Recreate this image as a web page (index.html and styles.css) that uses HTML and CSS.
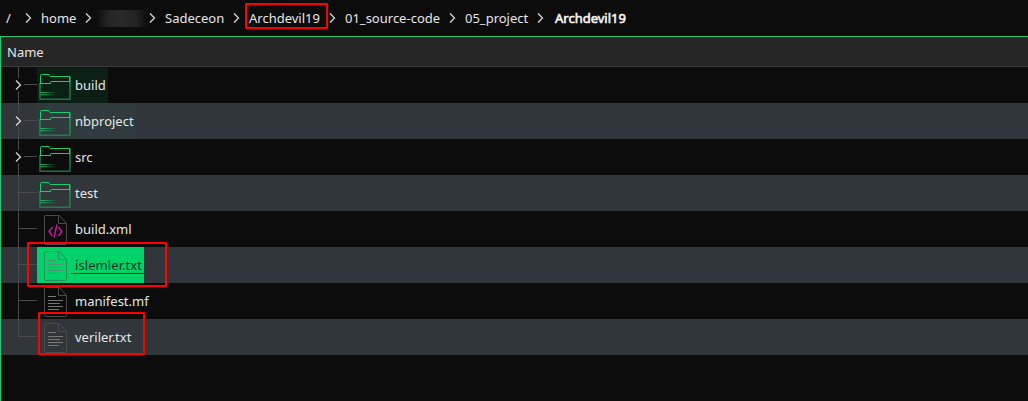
FILE: index.html
```
<!DOCTYPE html>
<html lang="en">
<head>
<meta charset="utf-8">
<title>Archdevil19</title>
<link rel="stylesheet" href="styles.css">
</head>
<body>
<svg class="defs" width="0" height="0">
  <defs>
    <linearGradient id="edge" x1="0" y1="0" x2="0" y2="1">
      <stop offset="0" stop-color="#20d673"/><stop offset="0.35" stop-color="#17a457"/><stop offset="1" stop-color="#258750"/>
    </linearGradient>
    <linearGradient id="fade" x1="0" y1="0" x2="1" y2="0">
      <stop offset="0" stop-color="#1ac468"/><stop offset="1" stop-color="#1ac468" stop-opacity="0"/>
    </linearGradient>
    <symbol id="chevron" viewBox="0 0 7 12"><path d="M1 1.5 5.5 6 1 10.5" fill="none" stroke="#d8d8d8" stroke-width="1.3"/></symbol>
    <symbol id="folder" viewBox="0 0 32 28">
      <path d="M1 10V26.200H31V3.500" fill="none" stroke="url(#edge)" stroke-width="1.5" stroke-linejoin="round" opacity=".8"/>
      <path d="M1.500 10.500V2.500Q1.500 1.500 2.500 1.500H10V2.500L11 3.500H30.500V9" fill="none" stroke="#1ccb6c"/>
      <path d="M1 10.500H11.500V9L12.500 8.500H30.500" fill="none" stroke="#1ccb6c"/>
      <path d="M1.500 19H18V20H1.500ZM1.500 21.200H18V22.200H1.500Z" fill="url(#fade)"/>
    </symbol>
    <symbol id="sheet" viewBox="0 0 24 31">
      <path d="M1.500.5H15.500L22.500 8.500V28.500Q22.500 29.500 21.500 29.500H1.500Q.5 29.500.5 28.500V1.500Q.5.5 1.500.5Z" fill="none" stroke="currentColor"/>
      <path d="M14.500.5V8.500H22.500" fill="none" stroke="currentColor"/>
    </symbol>
    <symbol id="lines" viewBox="0 0 24 31">
      <path d="M4 9.500H12M4 13.500H19M4 16.500H16M4 19.500H19M4 22.500H15" fill="none" stroke="currentColor" stroke-width="1.2"/>
    </symbol>
    <symbol id="code" viewBox="0 0 24 31">
      <path d="M8.500 12 5 16.500 8.500 21M14.500 12 18 16.500 14.500 21M13 9.500 10 22.500" fill="none" stroke="#d410a6" stroke-width="1.4"/>
    </symbol>
  </defs>
</svg>
<nav class="crumbs">
  <span class="crumb root">/</span><svg class="sep"><use href="#chevron"/></svg>
  <span class="crumb home">home</span><svg class="sep"><use href="#chevron"/></svg>
  <span class="redacted"></span><svg class="sep"><use href="#chevron"/></svg>
  <span class="crumb user">Sadeceon</span><svg class="sep"><use href="#chevron"/></svg>
  <span class="crumb repo">Archdevil19</span><svg class="sep"><use href="#chevron"/></svg>
  <span class="crumb source">01_source-code</span><svg class="sep"><use href="#chevron"/></svg>
  <span class="crumb project">05_project</span><svg class="sep"><use href="#chevron"/></svg>
  <span class="crumb current">Archdevil19</span>
</nav>
<main class="view">
  <header class="head">Name</header>
  <div class="row"><span class="tree expandable"><svg class="arrow"><use href="#chevron"/></svg></span><span class="item build"><svg class="folder"><use href="#folder"/></svg><span class="label">build</span></span></div>
  <div class="row"><span class="tree expandable"><svg class="arrow"><use href="#chevron"/></svg></span><span class="item nbproject"><svg class="folder"><use href="#folder"/></svg><span class="label">nbproject</span></span></div>
  <div class="row"><span class="tree expandable"><svg class="arrow"><use href="#chevron"/></svg></span><span class="item"><svg class="folder"><use href="#folder"/></svg><span class="label">src</span></span></div>
  <div class="row"><span class="tree"></span><span class="item"><svg class="folder"><use href="#folder"/></svg><span class="label">test</span></span></div>
  <div class="row"><span class="tree"></span><span class="item"><svg class="file"><use href="#sheet"/><use href="#code"/></svg><span class="label">build.xml</span></span></div>
  <div class="row"><span class="tree"></span><span class="item selected"><svg class="file"><use href="#sheet"/><use class="ink" href="#lines"/></svg><span class="label">islemler.txt</span></span></div>
  <div class="row"><span class="tree"></span><span class="item"><svg class="file"><use href="#sheet"/><use class="ink" href="#lines"/></svg><span class="label">manifest.mf</span></span></div>
  <div class="row"><span class="tree last"></span><span class="item"><svg class="file"><use href="#sheet"/><use class="ink" href="#lines"/></svg><span class="label">veriler.txt</span></span></div>
</main>
<div class="mark mark-repo"></div>
<div class="mark mark-islemler"></div>
<div class="mark mark-veriler"></div>
</body>
</html>
```
FILE: styles.css
```
* { box-sizing: border-box; }
body {
  margin: 0;
  width: 1028px;
  height: 401px;
  overflow: hidden;
  position: relative;
  display: flex;
  flex-direction: column;
  background: #0c0c0c;
  color: #e6e6e6;
  font: 13px/18px "Noto Sans", sans-serif;
  white-space: nowrap;
}
svg { display: block; flex: none; }
.defs { position: absolute; }
.crumbs {
  flex: none;
  height: 36px;
  padding-left: 6px;
  display: flex;
  align-items: center;
}
.crumb { flex: none; }
.root { width: 10px; }
.home { width: 35px; }
.user { width: 59px; }
.repo { width: 71px; }
.source { width: 95px; }
.project { width: 63px; }
.current { margin-left: 2px; -webkit-text-stroke: 0.6px #f4f4f4; color: #f4f4f4; }
.sep { width: 7px; height: 12px; margin: 0 9px; }
.redacted {
  flex: none;
  width: 52px;
  height: 17px;
  margin: 0 -8px 0 -5px;
  background: linear-gradient(90deg, #0c0c0c, #252525 25%, #2a2a2a 50%, #222 78%, #0c0c0c);
}
.view {
  flex: 1;
  border-top: 1px solid #24c872;
  border-left: 1px solid #24c872;
}
.head {
  height: 30px;
  padding: 6px 0 0 6px;
  background: #262626;
  border-bottom: 1px solid #3b3b3b;
}
.row { height: 36px; display: flex; }
.row:nth-child(odd) { background: #31363b; }
.tree {
  flex: none;
  width: 36px;
  background:
    linear-gradient(#4b4b4b, #4b4b4b) 17px 0 / 1px 100% no-repeat,
    linear-gradient(#4b4b4b, #4b4b4b) 18px 17px / 18px 1px no-repeat;
}
.tree.last {
  background:
    linear-gradient(#4b4b4b, #4b4b4b) 17px 0 / 1px 17px no-repeat,
    linear-gradient(#4b4b4b, #4b4b4b) 17px 17px / 19px 1px no-repeat;
}
.tree.expandable {
  padding: 12px 0 0 14px;
  background:
    linear-gradient(#4b4b4b, #4b4b4b) 17px 0 / 1px 11px no-repeat,
    linear-gradient(#4b4b4b, #4b4b4b) 17px 24px / 1px 12px no-repeat,
    linear-gradient(#4b4b4b, #4b4b4b) 23px 17px / 13px 1px no-repeat;
}
.arrow { width: 7px; height: 12px; }
.item { display: flex; height: 36px; padding-left: 2px; }
.build { width: 71px; background: #0c1f15; }
.nbproject { width: 99px; background: #2f3b3c; }
.folder { width: 32px; height: 28px; margin: 6px 2px 0 0; }
.file { width: 24px; height: 31px; margin: 4px 5px 0 5px; color: #4b4b4b; }
.ink { color: #777; }
.label { height: 27px; padding: 9px 0 0 2px; }
.selected { width: 107px; background: #00d26a; color: #12301f; }
.selected .file { color: #2a8f5b; }
.selected .ink { color: #509370; }
.selected .label {
  flex: 1;
  margin-left: -2px;
  padding-left: 4px;
  letter-spacing: 0.08px;
  border-bottom: 1px solid #123b25;
}
.mark {
  position: absolute;
  border: 2px solid #f00;
  border-radius: 1px;
}
.mark-repo { left: 245px; top: 3px; width: 83px; height: 26px; }
.mark-islemler { left: 27px; top: 242px; width: 140px; height: 45px; }
.mark-veriler { left: 38px; top: 312px; width: 107px; height: 43px; }
```
